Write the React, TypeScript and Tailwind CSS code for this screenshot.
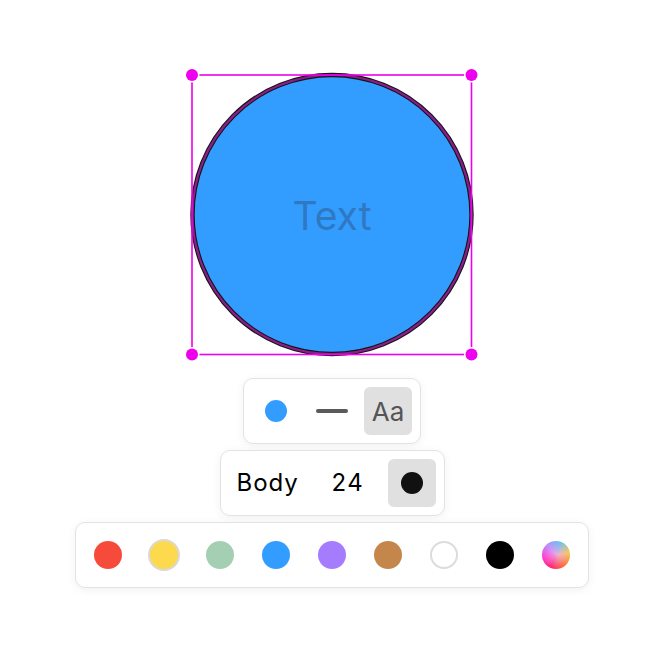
import React from 'react';

const swatches = [
    { key: 'red', cls: 'bg-[#f64a3a]' },
    { key: 'yellow', cls: 'bg-[#fdd94e] ring-2 ring-[#d9d9d9]' },
    { key: 'green', cls: 'bg-[#a5cfb3]' },
    { key: 'blue', cls: 'bg-[#339dff]' },
    { key: 'purple', cls: 'bg-[#a67cff]' },
    { key: 'brown', cls: 'bg-[#c5864b]' },
    { key: 'white', cls: 'bg-white border-2 border-[#dcdcdc]' },
    { key: 'black', cls: 'bg-black' },
];

const Handle = ({ cx, cy }: { cx: number; cy: number }) => (
    <g>
        <circle cx={cx} cy={cy} r={7.5} fill="#ffffff" />
        <circle cx={cx} cy={cy} r={6} fill="#ee00ee" />
    </g>
);

const Panel = ({ children, className = '' }: { children: React.ReactNode; className?: string }) => (
    <div
        className={`flex items-center p-2 bg-white border border-[#e3e3e3] rounded-[10px] shadow-[0_2px_10px_rgba(0,0,0,0.06)] ${className}`}
    >
        {children}
    </div>
);

export default function App() {
    return (
        <div
            className="w-[664px] h-[671px] bg-white flex flex-col items-center pt-[65px]"
            style={{ fontFamily: 'Inter, "Liberation Sans", sans-serif' }}
        >
            {/* canvas: shape + selection */}
            <svg width="300" height="300" viewBox="0 0 300 300">
                <circle cx="150" cy="149.5" r="139.5" fill="#339dff" stroke="#151515" strokeWidth="4.4" />
                <circle cx="150" cy="149.5" r="139.5" fill="none" stroke="#cc22cc" strokeOpacity="0.65" strokeWidth="2.2" />
                <text
                    x="150"
                    y="150"
                    textAnchor="middle"
                    dominantBaseline="central"
                    fontSize="39"
                    fill="#2f78c2"
                    fontFamily='Inter, "Liberation Sans", sans-serif'
                >
                    Text
                </text>
                <rect x="10" y="10" width="279.5" height="279.5" fill="none" stroke="#ee00ee" strokeWidth="1.6" />
                <Handle cx={10} cy={10} />
                <Handle cx={289.5} cy={10} />
                <Handle cx={10} cy={289.5} />
                <Handle cx={289.5} cy={289.5} />
            </svg>

            <div className="mt-[13px] flex flex-col items-center gap-[6px]">
                {/* style toolbar */}
                <Panel className="gap-2">
                    <div className="w-12 h-12 flex items-center justify-center">
                        <span className="w-[22px] h-[22px] rounded-full bg-[#339dff]" />
                    </div>
                    <div className="w-12 h-12 flex items-center justify-center">
                        <span className="w-8 h-1 rounded-full bg-[#5a5a5a]" />
                    </div>
                    <div className="w-12 h-12 flex items-center justify-center rounded-md bg-[#e0e0e0] text-[26px] text-[#555555]">
                        Aa
                    </div>
                </Panel>

                {/* text toolbar */}
                <Panel className="pl-4 w-[225px]">
                    <span className="w-[62px] text-[24px] tracking-[0.04em] text-black">Body</span>
                    <span className="ml-[33px] w-[32px] text-[24px] tracking-[0.06em] text-black">24</span>
                    <div className="ml-auto w-12 h-12 flex items-center justify-center rounded-md bg-[#e0e0e0]">
                        <span className="w-[22px] h-[22px] rounded-full bg-[#111111]" />
                    </div>
                </Panel>

                {/* colour palette */}
                <Panel className="gap-2">
                    {swatches.map((s) => (
                        <div key={s.key} className="w-12 h-12 flex items-center justify-center">
                            <span className={`w-7 h-7 rounded-full box-border ${s.cls}`} />
                        </div>
                    ))}
                    <div className="w-12 h-12 flex items-center justify-center">
                        <span className="w-7 h-7 rounded-full bg-[conic-gradient(from_200deg,#ff1f6b,#ff3dd0,#b98cff,#55c6f0,#f5d23a,#ff6a1f,#ff1f6b)] relative overflow-hidden">
                            <span className="absolute inset-0 rounded-full bg-[radial-gradient(circle_at_55%_50%,rgba(240,170,230,0.9),rgba(240,170,230,0)_70%)]" />
                        </span>
                    </div>
                </Panel>
            </div>
        </div>
    );
}
